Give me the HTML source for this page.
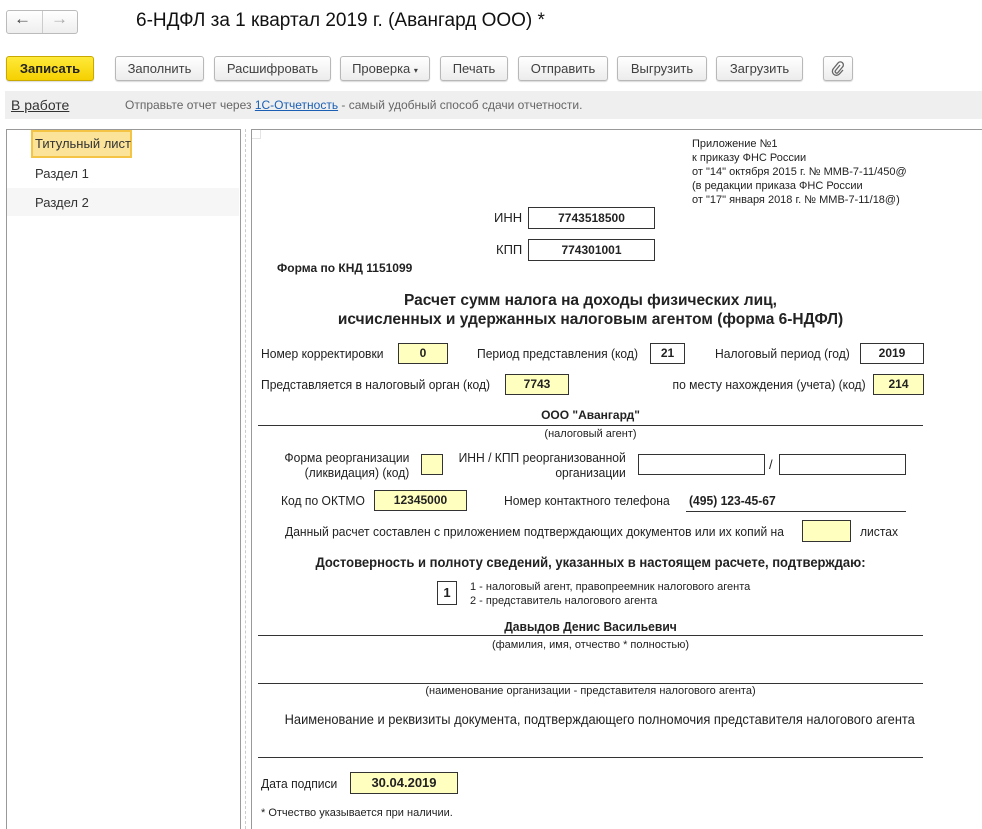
<!DOCTYPE html>
<html><head><meta charset="utf-8"><style>
*{box-sizing:border-box;margin:0;padding:0}
body{width:982px;height:823px;overflow:hidden;background:#fff;font-family:"Liberation Sans",sans-serif;color:#333;position:relative;font-size:13px}
.a{position:absolute;white-space:nowrap}
.btn{position:absolute;top:56px;height:25px;border:1px solid #b8b8b8;border-radius:3px;background:linear-gradient(#fff,#ececec);box-shadow:0 1px 1px rgba(0,0,0,.15);font-size:13px;color:#404040;text-align:center;line-height:23px}
.f{font-family:"Liberation Sans Narrow","Liberation Sans",sans-serif;color:#222;font-size:12px;position:absolute;white-space:nowrap}
.c{transform:scaleX(.93);transform-origin:left center}
.cr{transform:scaleX(.93);transform-origin:right center}
.cc{transform:scaleX(.93);transform-origin:center center}
.b{font-weight:bold}
.box{position:absolute;border:1px solid #333;background:#fff;font-family:"Liberation Sans Narrow","Liberation Sans",sans-serif;font-weight:bold;font-size:12px;text-align:center;color:#222}
.y{background:#ffffc0}
.ln{position:absolute;left:258px;width:665px;height:1px;background:#333}
.sm{font-size:11px}
</style></head><body>
<div class="a" style="left:6px;top:10px;width:72px;height:24px;border:1px solid #bbb;border-radius:3px;background:linear-gradient(#fff,#eee)"></div>
<div class="a" style="left:42px;top:11px;width:1px;height:22px;background:#ccc"></div>
<div class="a" style="left:14px;top:9px;font-size:17px;color:#444">&#8592;</div>
<div class="a" style="left:51px;top:9px;font-size:17px;color:#aaa">&#8594;</div>
<div class="a" style="left:136px;top:10px;font-size:19px;color:#111">6-НДФЛ за 1 квартал 2019 г. (Авангард ООО) *</div>
<div class="btn" style="left:6px;width:88px;background:linear-gradient(#ffea3a,#f5d000);border-color:#c9a800;color:#222;font-weight:bold">Записать</div>
<div class="btn" style="left:115px;width:89px">Заполнить</div>
<div class="btn" style="left:214px;width:117px">Расшифровать</div>
<div class="btn" style="left:340px;width:90px">Проверка <span style="font-size:8px">&#9662;</span></div>
<div class="btn" style="left:440px;width:68px">Печать</div>
<div class="btn" style="left:518px;width:90px">Отправить</div>
<div class="btn" style="left:617px;width:90px">Выгрузить</div>
<div class="btn" style="left:716px;width:87px">Загрузить</div>
<div class="btn" style="left:823px;width:30px"><svg width="14" height="16" viewBox="0 0 14 16" style="margin-top:4px"><path d="M9 4 L4.5 9.5 a1.6 1.6 0 0 0 2.3 2.2 L11.5 6 a3 3 0 0 0-4.3-4.2 L2.5 7.5 a4 4 0 0 0 5.8 5.6 L12 9" fill="none" stroke="#666" stroke-width="1.3"/></svg></div>
<div class="a" style="left:5px;top:91px;width:977px;height:28px;background:#efefef"></div>
<div class="a" style="left:11px;top:97px;font-size:14px;color:#333;text-decoration:underline">В работе</div>
<div class="a" style="left:125px;top:98px;font-size:12px;color:#666">Отправьте отчет через <span style="color:#1a5fb4;text-decoration:underline">1С-Отчетность</span> - самый удобный способ сдачи отчетности.</div>
<div class="a" style="left:6px;top:129px;width:235px;height:700px;border:1px solid #999;border-width:1px 1px 0 1px"></div>
<div class="a" style="left:7px;top:188px;width:232px;height:28px;background:#f6f6f6"></div>
<div class="a" style="left:31px;top:130px;width:101px;height:28px;background:#fbe39a;border:2px solid #f4c445"></div>
<div class="a" style="left:35px;top:136px;font-size:13px;color:#333">Титульный лист</div>
<div class="a" style="left:35px;top:166px;font-size:13px;color:#333">Раздел 1</div>
<div class="a" style="left:35px;top:195px;font-size:13px;color:#333">Раздел 2</div>
<div class="a" style="left:245px;top:129px;width:0;height:700px;border-left:1px dashed #ccc"></div>
<div class="a" style="left:251px;top:129px;width:740px;height:700px;border:1px solid #999;border-width:1px 0 0 1px"></div>
<div class="a" style="left:252px;top:130px;width:9px;height:9px;border:1px solid #e4e4e4;border-width:0 1px 1px 0"></div>
<div class="f sm" style="left:692px;top:137px;line-height:14px">Приложение №1<br>к приказу ФНС России<br>от "14" октября 2015 г. № ММВ-7-11/450@<br>(в редакции приказа ФНС России<br>от "17" января 2018 г. № ММВ-7-11/18@)</div>
<div class="f" style="left:494px;top:210px;font-size:13px">ИНН</div>
<div class="box" style="left:528px;top:207px;width:127px;height:22px;line-height:20px">7743518500</div>
<div class="f" style="left:496px;top:242px;font-size:13px">КПП</div>
<div class="box" style="left:528px;top:239px;width:127px;height:22px;line-height:20px">774301001</div>
<div class="f b" style="left:277px;top:261px">Форма по КНД 1151099</div>
<div class="f b" style="left:258px;width:665px;top:291px;font-size:15.5px;text-align:center;line-height:19px">Расчет сумм налога на доходы физических лиц,<br>исчисленных и удержанных налоговым агентом (форма 6-НДФЛ)</div>
<div class="f c" style="left:261px;top:346px;font-size:13px">Номер корректировки</div>
<div class="box y" style="left:398px;top:343px;width:50px;height:21px;line-height:19px">0</div>
<div class="f c" style="left:477px;top:346px;font-size:13px">Период представления (код)</div>
<div class="box" style="left:650px;top:343px;width:35px;height:21px;line-height:19px">21</div>
<div class="f c" style="left:715px;top:346px;font-size:13px">Налоговый период (год)</div>
<div class="box" style="left:860px;top:343px;width:64px;height:21px;line-height:19px">2019</div>
<div class="f c" style="left:261px;top:377px;font-size:13px">Представляется в налоговый орган (код)</div>
<div class="box y" style="left:505px;top:374px;width:64px;height:21px;line-height:19px">7743</div>
<div class="f cr" style="right:116px;top:377px;font-size:13px">по месту нахождения (учета) (код)</div>
<div class="box y" style="left:873px;top:374px;width:51px;height:21px;line-height:19px">214</div>
<div class="f b" style="left:258px;width:665px;top:408px;text-align:center">ООО "Авангард"</div>
<div class="ln" style="top:425px"></div>
<div class="f sm" style="left:258px;width:665px;top:428px;text-align:center">(налоговый агент)</div>
<div class="f cr" style="right:573px;top:450px;font-size:13px;text-align:right;line-height:15px">Форма реорганизации<br>(ликвидация) (код)</div>
<div class="box y" style="left:421px;top:454px;width:22px;height:21px"></div>
<div class="f cr" style="right:356px;top:450px;font-size:13px;text-align:right;line-height:15px">ИНН / КПП реорганизованной<br>организации</div>
<div class="box" style="left:638px;top:454px;width:127px;height:21px"></div>
<div class="f" style="left:769px;top:457px;font-size:13px">/</div>
<div class="box" style="left:779px;top:454px;width:127px;height:21px"></div>
<div class="f c" style="left:281px;top:493px;font-size:13px">Код по ОКТМО</div>
<div class="box y" style="left:374px;top:490px;width:93px;height:21px;line-height:19px">12345000</div>
<div class="f c" style="left:504px;top:493px;font-size:13px">Номер контактного телефона</div>
<div class="f b c" style="left:689px;top:493px;font-size:13px">(495) 123-45-67</div>
<div class="a" style="left:686px;top:511px;width:220px;height:1px;background:#333"></div>
<div class="f c" style="left:285px;top:524px;font-size:13px">Данный расчет составлен с приложением подтверждающих документов или их копий на</div>
<div class="box y" style="left:802px;top:520px;width:49px;height:22px"></div>
<div class="f c" style="left:860px;top:524px;font-size:13px">листах</div>
<div class="f b cc" style="left:258px;width:665px;top:554px;font-size:14px;text-align:center">Достоверность и полноту сведений, указанных в настоящем расчете, подтверждаю:</div>
<div class="box" style="left:437px;top:581px;width:20px;height:24px;line-height:22px;font-size:13px">1</div>
<div class="f sm" style="left:470px;top:580px;line-height:14px">1 - налоговый агент, правопреемник налогового агента<br>2 - представитель налогового агента</div>
<div class="f b cc" style="left:258px;width:665px;top:619px;font-size:13px;text-align:center">Давыдов Денис Васильевич</div>
<div class="ln" style="top:635px"></div>
<div class="f sm" style="left:258px;width:665px;top:639px;text-align:center">(фамилия, имя, отчество * полностью)</div>
<div class="ln" style="top:683px"></div>
<div class="f sm" style="left:258px;width:665px;top:685px;text-align:center">(наименование организации - представителя налогового агента)</div>
<div class="f cc" style="left:258px;width:665px;top:711px;font-size:14px;text-align:center;transform:scaleX(.92)">Наименование и реквизиты документа, подтверждающего полномочия представителя налогового агента</div>
<div class="ln" style="top:757px"></div>
<div class="f c" style="left:261px;top:776px;font-size:13px">Дата подписи</div>
<div class="box y" style="left:350px;top:772px;width:108px;height:22px;line-height:20px;font-size:13px">30.04.2019</div>
<div class="f sm" style="left:261px;top:807px">* Отчество указывается при наличии.</div>
</body></html>
